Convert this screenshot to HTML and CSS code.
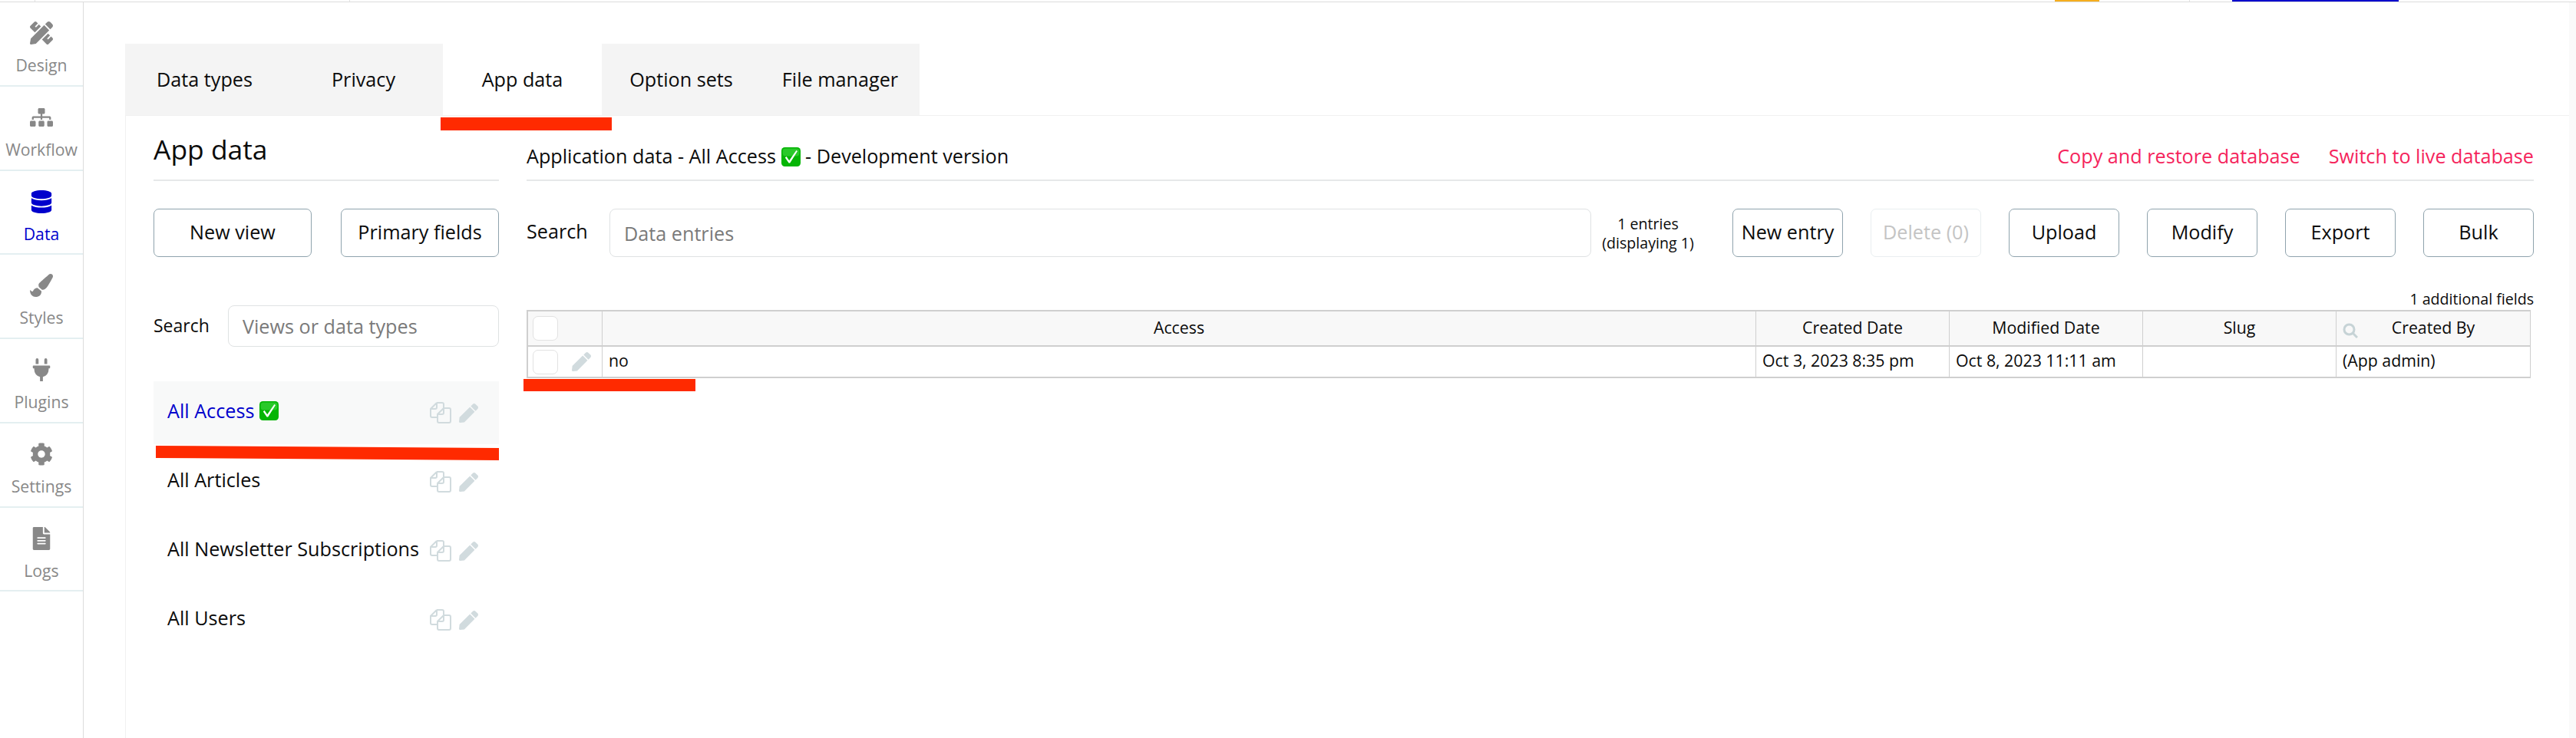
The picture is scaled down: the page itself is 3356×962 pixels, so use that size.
FILE: index.html
```html
<!DOCTYPE html>
<html lang="en">
<head>
<meta charset="utf-8">
<title>App data</title>
<link rel="stylesheet" href="styles.css">
</head>
<body>
<svg class="defs" width="0" height="0" aria-hidden="true">
  <symbol id="i-pen" viewBox="0 0 512 512"><path d="M290.74 93.24l128.02 128.02-277.99 277.99-114.14 12.6C11.35 513.54-1.56 500.62.14 485.34l12.7-114.22 277.9-277.88zm207.2-19.06l-60.11-60.11c-18.75-18.75-49.16-18.75-67.91 0l-56.55 56.55 128.02 128.02 56.55-56.55c18.75-18.76 18.75-49.16 0-67.91z"/></symbol>
  <symbol id="i-copy" viewBox="0 0 28 28"><path class="stroke" d="M9 1h7a2 2 0 0 1 2 2v5M9 1L1 9v9a2 2 0 0 0 2 2h7M9 1v6a2 2 0 0 1-2 2H1M18 8h7a2 2 0 0 1 2 2v15a2 2 0 0 1-2 2H12a2 2 0 0 1-2-2v-9zM18 8v6a2 2 0 0 1-2 2h-6"/></symbol>
  <symbol id="i-check" viewBox="0 0 25 25"><rect width="25" height="25" rx="4.5" fill="#05b505"/><rect x="1.5" y="1.5" width="22" height="10" rx="4" fill="#47d847" opacity=".55"/><path d="M4.8 13.6l1.8-1.5 3.6 5.2L19.4 3.9l1.6 1L11.2 20.6H9.6z" fill="#fff"/></symbol>
</svg>

<div class="topbar">
  <span class="tick tick-a"></span>
  <span class="tick tick-b"></span>
  <span class="mark mark-orange"></span>
  <span class="tick tick-c"></span>
  <span class="mark mark-blue"></span>
</div>

<div class="app">
  <nav class="nav">
    <a class="nav-item">
      <svg class="nav-icon" viewBox="0 0 512 512"><path d="M109.46 244.04l134.58-134.56-44.12-44.12-61.68 61.68a7.919 7.919 0 0 1-11.21 0l-11.21-11.21c-3.1-3.1-3.1-8.12 0-11.21l61.68-61.68-33.64-33.65C131.47-3.1 111.39-3.1 99 9.29L9.29 99c-12.38 12.39-12.39 32.47 0 44.86l100.17 100.18zm388.47-116.8c18.76-18.76 18.75-49.17 0-67.93l-45.25-45.25c-18.76-18.76-49.18-18.76-67.95 0l-46.02 46.01 113.2 113.2 46.02-46.03zM316.08 82.71l-297 296.96L.32 487.11c-2.53 14.49 10.09 27.11 24.59 24.56l107.45-18.84L429.28 195.9 316.08 82.71zm186.63 285.43l-33.64-33.64-61.68 61.68c-3.1 3.1-8.12 3.1-11.21 0l-11.21-11.21c-3.09-3.1-3.09-8.12 0-11.21l61.68-61.68-44.14-44.14L267.93 402.5l100.21 100.2c12.39 12.39 32.47 12.39 44.86 0l89.71-89.7c12.38-12.39 12.38-32.47 0-44.86z"/></svg>
      <span class="nav-label">Design</span>
    </a>
    <a class="nav-item">
      <svg class="nav-icon" viewBox="0 0 640 512"><path d="M128 352H32c-17.67 0-32 14.33-32 32v96c0 17.67 14.33 32 32 32h96c17.67 0 32-14.33 32-32v-96c0-17.67-14.33-32-32-32zm-24-80h192v48h48v-48h192v48h48v-57.59c0-21.17-17.23-38.41-38.41-38.41H344v-64h40c17.67 0 32-14.33 32-32V32c0-17.67-14.33-32-32-32H256c-17.67 0-32 14.33-32 32v96c0 17.67 14.33 32 32 32h40v64H94.41C73.23 224 56 241.23 56 262.41V320h48v-48zm264 80h-96c-17.67 0-32 14.33-32 32v96c0 17.67 14.33 32 32 32h96c17.67 0 32-14.33 32-32v-96c0-17.67-14.33-32-32-32zm240 0h-96c-17.67 0-32 14.33-32 32v96c0 17.67 14.33 32 32 32h96c17.67 0 32-14.33 32-32v-96c0-17.67-14.33-32-32-32z"/></svg>
      <span class="nav-label">Workflow</span>
    </a>
    <a class="nav-item nav-active">
      <svg class="nav-icon" viewBox="0 0 448 512"><path d="M448 73.143v45.714C448 159.143 347.667 192 224 192S0 159.143 0 118.857V73.143C0 32.857 100.333 0 224 0s224 32.857 224 73.143zM448 176v102.857C448 319.143 347.667 352 224 352S0 319.143 0 278.857V176c48.125 33.143 136.208 48.572 224 48.572S399.874 209.143 448 176zm0 160v102.857C448 479.143 347.667 512 224 512S0 479.143 0 438.857V336c48.125 33.143 136.208 48.572 224 48.572S399.874 369.143 448 336z"/></svg>
      <span class="nav-label">Data</span>
    </a>
    <a class="nav-item">
      <svg class="nav-icon" viewBox="0 0 512 512"><path d="M167.02 309.34c-40.12 2.58-76.53 17.86-97.19 72.3-2.35 6.21-8 9.98-14.59 9.98-11.11 0-45.46-27.67-55.25-34.35C0 439.62 37.93 512 128 512c75.86 0 128-43.77 128-120.19 0-3.11-.65-6.08-.97-9.13l-88.01-73.34zM457.89 0c-15.16 0-29.37 6.71-40.21 16.45C213.27 199.05 192 203.34 192 257.09c0 13.7 3.25 26.76 8.73 38.7l63.82 53.18c7.21 1.8 14.64 3.03 22.39 3.03 62.11 0 98.11-45.47 211.16-256.46 7.38-14.35 13.9-29.85 13.9-45.99C512 20.64 486 0 457.89 0z"/></svg>
      <span class="nav-label">Styles</span>
    </a>
    <a class="nav-item">
      <svg class="nav-icon" viewBox="0 0 384 512"><path d="M320 32a32 32 0 0 0-64 0v96h64zm48 128H16a16 16 0 0 0-16 16v32a16 16 0 0 0 16 16h16v32a160.07 160.07 0 0 0 128 156.8V512h64v-99.2A160.07 160.07 0 0 0 352 256v-32h16a16 16 0 0 0 16-16v-32a16 16 0 0 0-16-16zM128 32a32 32 0 0 0-64 0v96h64z"/></svg>
      <span class="nav-label">Plugins</span>
    </a>
    <a class="nav-item">
      <svg class="nav-icon" viewBox="0 0 512 512"><path d="M487.4 315.7l-42.6-24.6c4.3-23.2 4.3-47 0-70.2l42.6-24.6c4.9-2.8 7.1-8.6 5.5-14-11.1-35.6-30-67.8-54.7-94.6-3.8-4.1-10-5.1-14.8-2.3L380.8 110c-17.9-15.4-38.5-27.3-60.8-35.1V25.8c0-5.6-3.9-10.5-9.4-11.7-36.7-8.2-74.3-7.8-109.2 0-5.5 1.2-9.4 6.1-9.4 11.7V75c-22.2 7.9-42.8 19.8-60.8 35.1L88.7 85.5c-4.9-2.8-11-1.9-14.8 2.3-24.7 26.7-43.6 58.9-54.7 94.6-1.7 5.4.6 11.2 5.5 14L67.3 221c-4.3 23.2-4.3 47 0 70.2l-42.6 24.6c-4.9 2.8-7.1 8.6-5.5 14 11.1 35.6 30 67.8 54.7 94.6 3.8 4.1 10 5.1 14.8 2.3l42.6-24.6c17.9 15.4 38.5 27.3 60.8 35.1v49.2c0 5.6 3.9 10.5 9.4 11.7 36.7 8.2 74.3 7.8 109.2 0 5.5-1.2 9.4-6.1 9.4-11.7v-49.2c22.2-7.9 42.8-19.8 60.8-35.1l42.6 24.6c4.9 2.8 11 1.9 14.8-2.3 24.7-26.7 43.6-58.9 54.7-94.6 1.5-5.5-.7-11.3-5.6-14.1zM256 336c-44.1 0-80-35.9-80-80s35.9-80 80-80 80 35.9 80 80-35.9 80-80 80z"/></svg>
      <span class="nav-label">Settings</span>
    </a>
    <a class="nav-item">
      <svg class="nav-icon" viewBox="0 0 384 512"><path d="M224 136V0H24C10.7 0 0 10.7 0 24v464c0 13.3 10.7 24 24 24h336c13.3 0 24-10.7 24-24V160H248c-13.2 0-24-10.8-24-24zm64 236c0 6.6-5.4 12-12 12H108c-6.6 0-12-5.4-12-12v-8c0-6.6 5.4-12 12-12h168c6.6 0 12 5.4 12 12v8zm0-64c0 6.6-5.4 12-12 12H108c-6.6 0-12-5.4-12-12v-8c0-6.6 5.4-12 12-12h168c6.6 0 12 5.4 12 12v8zm0-72v8c0 6.6-5.4 12-12 12H108c-6.6 0-12-5.4-12-12v-8c0-6.6 5.4-12 12-12h168c6.6 0 12 5.4 12 12zm96-114.1v6.1H256V0h6.1c6.4 0 12.5 2.5 17 7l97.9 98c4.5 4.5 7 10.6 7 16.9z"/></svg>
      <span class="nav-label">Logs</span>
    </a>
  </nav>

  <main class="main">
    <div class="tabs">
      <div class="tab">Data types</div>
      <div class="tab">Privacy</div>
      <div class="tab tab-active">App data</div>
      <div class="tab">Option sets</div>
      <div class="tab">File manager</div>
    </div>

    <div class="content">
      <aside class="left">
        <header class="head"><h1 class="heading">App data</h1></header>
        <div class="left-actions">
          <button class="btn btn-wide">New view</button>
          <button class="btn btn-wide">Primary fields</button>
        </div>
        <div class="left-search">
          <span class="label-small">Search</span>
          <div class="input input-left">Views or data types</div>
        </div>
        <ul class="views">
          <li class="view view-active">
            <span class="view-name">All Access <svg class="emoji"><use href="#i-check"/></svg></span>
            <svg class="ic-copy"><use href="#i-copy"/></svg><svg class="ic-pen"><use href="#i-pen"/></svg>
          </li>
          <li class="view">
            <span class="view-name">All Articles</span>
            <svg class="ic-copy"><use href="#i-copy"/></svg><svg class="ic-pen"><use href="#i-pen"/></svg>
          </li>
          <li class="view">
            <span class="view-name">All Newsletter Subscriptions</span>
            <svg class="ic-copy"><use href="#i-copy"/></svg><svg class="ic-pen"><use href="#i-pen"/></svg>
          </li>
          <li class="view">
            <span class="view-name">All Users</span>
            <svg class="ic-copy"><use href="#i-copy"/></svg><svg class="ic-pen"><use href="#i-pen"/></svg>
          </li>
        </ul>
      </aside>

      <section class="right">
        <header class="head head-right">
          <div class="title">Application data - All Access <svg class="emoji"><use href="#i-check"/></svg> - Development version</div>
          <div class="links">
            <a class="link">Copy and restore database</a>
            <a class="link">Switch to live database</a>
          </div>
        </header>

        <div class="toolbar">
          <span class="label">Search</span>
          <div class="input input-right">Data entries</div>
          <div class="count">1 entries<br>(displaying 1)</div>
          <div class="toolbar-btns">
            <button class="btn btn-tool">New entry</button>
            <button class="btn btn-tool btn-disabled">Delete (0)</button>
            <button class="btn btn-tool">Upload</button>
            <button class="btn btn-tool">Modify</button>
            <button class="btn btn-tool">Export</button>
            <button class="btn btn-tool">Bulk</button>
          </div>
        </div>

        <div class="additional">1 additional fields</div>

        <div class="table">
          <div class="row row-head">
            <div class="cell cell-check"><span class="checkbox"></span></div>
            <div class="cell cell-main cell-center">Access</div>
            <div class="cell cell-col cell-center">Created Date</div>
            <div class="cell cell-col cell-center">Modified Date</div>
            <div class="cell cell-col cell-center">Slug</div>
            <div class="cell cell-col cell-center cell-search">
              <svg class="ic-search" viewBox="0 0 20 20"><circle cx="8.5" cy="8.5" r="6.5"/><path d="M13.5 13.5L19 19"/></svg>
              Created By
            </div>
          </div>
          <div class="row row-body">
            <div class="cell cell-check"><span class="checkbox checkbox-row"></span><svg class="ic-pen ic-pen-row"><use href="#i-pen"/></svg></div>
            <div class="cell cell-main">no</div>
            <div class="cell cell-col">Oct 3, 2023 8:35 pm</div>
            <div class="cell cell-col">Oct 8, 2023 11:11 am</div>
            <div class="cell cell-col"></div>
            <div class="cell cell-col">(App admin)</div>
          </div>
        </div>
      </section>
    </div>
  </main>
</div>

<div class="strike strike-tab"></div>
<div class="strike strike-view"></div>
<div class="strike strike-row"></div>
</body>
</html>
```
FILE: styles.css
```css
* { box-sizing: border-box; }
html, body { margin: 0; padding: 0; }
body {
  position: relative;
  width: 3356px;
  height: 962px;
  overflow: hidden;
  background: #fff;
  color: #0b0b0b;
  font-family: "Open Sans", "Noto Sans", sans-serif;
  font-size: 25.2px;
}
.defs { position: absolute; }

.topbar {
  position: relative;
  height: 3px;
  border-bottom: 1px solid #dcdcdc;
}
.tick { position: absolute; top: 0; width: 1px; height: 2px; background: #e2e2e2; }
.tick-a { left: 45px; }
.tick-b { left: 455px; }
.tick-c { left: 2852px; }
.mark { position: absolute; top: 0; height: 2px; }
.mark-orange { left: 2677px; width: 58px; background: #f6ae1f; }
.mark-blue { left: 2908px; width: 217px; background: #0000cc; }

.app { display: flex; height: 959px; }

.nav {
  flex: 0 0 109px;
  border-right: 1px solid #dcdcdc;
}
.nav-item {
  display: flex;
  flex-direction: column;
  align-items: center;
  height: 109.75px;
  padding-top: 25px;
  border-bottom: 2px solid #e4eff1;
  color: #888;
}
.nav-icon { width: 30px; height: 30px; fill: #888; }
.nav-label { margin-top: 13px; font-size: 21.2px; line-height: 28px; }
.nav-active { color: #0000cc; }
.nav-active .nav-icon { fill: #0000cc; }

.main {
  flex: 1;
  margin-left: 54px;
  padding-top: 54px;
  display: flex;
  flex-direction: column;
  margin-right: 9px;
  box-shadow: 9px 0 0 #fafafa;
}
.tabs { display: flex; height: 93px; }
.tab {
  width: 207px;
  display: flex;
  align-items: center;
  justify-content: center;
  padding-bottom: 2px;
  background: #f4f4f4;
}
.tab-active { background: #fff; }

.content {
  flex: 1;
  display: flex;
  gap: 36px;
  padding: 0 46px 0 36px;
  border-top: 1px solid #f1f1f1;
  border-left: 1px solid #f1f1f1;
}

.left { flex: 0 0 450px; }
.right { flex: 1; min-width: 0; }

.head {
  height: 85px;
  border-bottom: 2px solid #e6e8e9;
}
.heading {
  margin: 0;
  font-size: 35.4px;
  font-weight: 400;
  line-height: 86px;
}
.head-right {
  display: flex;
  justify-content: space-between;
  align-items: center;
  padding-top: 20px;
}
.title { white-space: nowrap; }
.title .emoji { vertical-align: -4px; }
.links { display: flex; gap: 37px; }
.link { color: #f5245c; }

.emoji { width: 25px; height: 25px; flex: none; }
.view-name .emoji { vertical-align: -3px; }

.btn {
  display: block;
  margin: 0;
  padding: 0;
  background: #fff;
  border: 1px solid #8fa3ad;
  border-radius: 7px;
  font: inherit;
  color: inherit;
  white-space: nowrap;
}
.btn-wide { width: 206px; height: 63px; padding-bottom: 3px; }
.btn-tool { width: 144px; height: 63px; padding-bottom: 3px; }
.btn-disabled { color: #c4c4c4; border-color: #e9eef0; }

.left-actions {
  display: flex;
  justify-content: space-between;
  margin-top: 36px;
}
.left-search {
  display: flex;
  align-items: center;
  justify-content: space-between;
  margin-top: 63px;
}
.label-small { font-size: 23px; padding-bottom: 2px; }
.input {
  display: flex;
  align-items: center;
  border: 1px solid #dfe2e3;
  border-radius: 8px;
  background: #fff;
  color: #7a7a7a;
}
.input-left { width: 353px; height: 54px; padding: 0 0 0 18px; }

.views { list-style: none; margin: 45px 0 0; padding: 0; display: flex; flex-direction: column; gap: 8px; }
.view {
  display: flex;
  align-items: center;
  height: 82px;
  padding: 0 27px 0 18px;
}
.view-active { background: #f8f9f9; }
.view-active .view-name { color: #0000cc; }
.view-name { flex: 1; white-space: nowrap; padding-bottom: 7px; }
.ic-copy { width: 28px; height: 28px; flex: none; }
.ic-pen { width: 25px; height: 25px; flex: none; margin-left: 10px; fill: #d1dbde; }
.stroke { fill: none; stroke: #d1dbde; stroke-width: 2px; }

.toolbar {
  display: flex;
  align-items: center;
  margin-top: 36px;
  height: 63px;
}
.label { width: 108px; flex: none; padding-bottom: 6px; }
.input-right { width: 1279px; height: 63px; padding: 1px 0 0 18px; flex: none; }
.count {
  width: 148px;
  flex: none;
  margin: 0 36px 0 0;
  text-align: center;
  font-size: 19.6px;
  line-height: 25px;
}
.toolbar-btns { display: flex; gap: 36px; }

.additional {
  margin-top: 43px;
  height: 26px;
  line-height: 24px;
  font-size: 19.6px;
  text-align: right;
}

.table {
  width: 2611px;
  border-top: 2px solid #cfcfcf;
  border-left: 2px solid #cfcfcf;
  border-right: 1px solid #cfcfcf;
  font-size: 21.3px;
}
.row { display: flex; border-bottom: 2px solid #cfcfcf; }
.row-head { height: 46px; background: #f8f8f8; }
.row-body { height: 41px; }
.cell {
  display: flex;
  align-items: center;
  padding: 0 8px 4px;
  white-space: nowrap;
  border-right: 1px solid #cfcfcf;
}
.cell:last-child { border-right: 0; }
.cell-check { width: 97px; flex: none; padding: 0 0 0 6px; }
.cell-main { flex: 1; }
.cell-col { width: 252px; flex: none; }
.cell-center { justify-content: center; }
.cell-search { position: relative; }
.checkbox {
  display: block;
  width: 33px;
  height: 32px;
  background: #fff;
  border: 1px solid #e2e2e2;
  border-radius: 7px;
}
.ic-pen-row { margin-left: 18px; }
.ic-search {
  position: absolute;
  left: 8px;
  top: 15px;
  width: 20px;
  height: 20px;
  fill: none;
  stroke: #c6d3d6;
  stroke-width: 3px;
}

.strike { position: absolute; background: #ff2a00; }
.strike-tab { left: 574px; top: 153px; width: 223px; height: 17px; }
.strike-view {
  left: 203px;
  top: 581px;
  width: 447px;
  height: 19px;
  clip-path: polygon(0 0, 100% 3px, 100% 100%, 0 16px);
}
.strike-row { left: 682px; top: 494px; width: 224px; height: 16px; }
```
